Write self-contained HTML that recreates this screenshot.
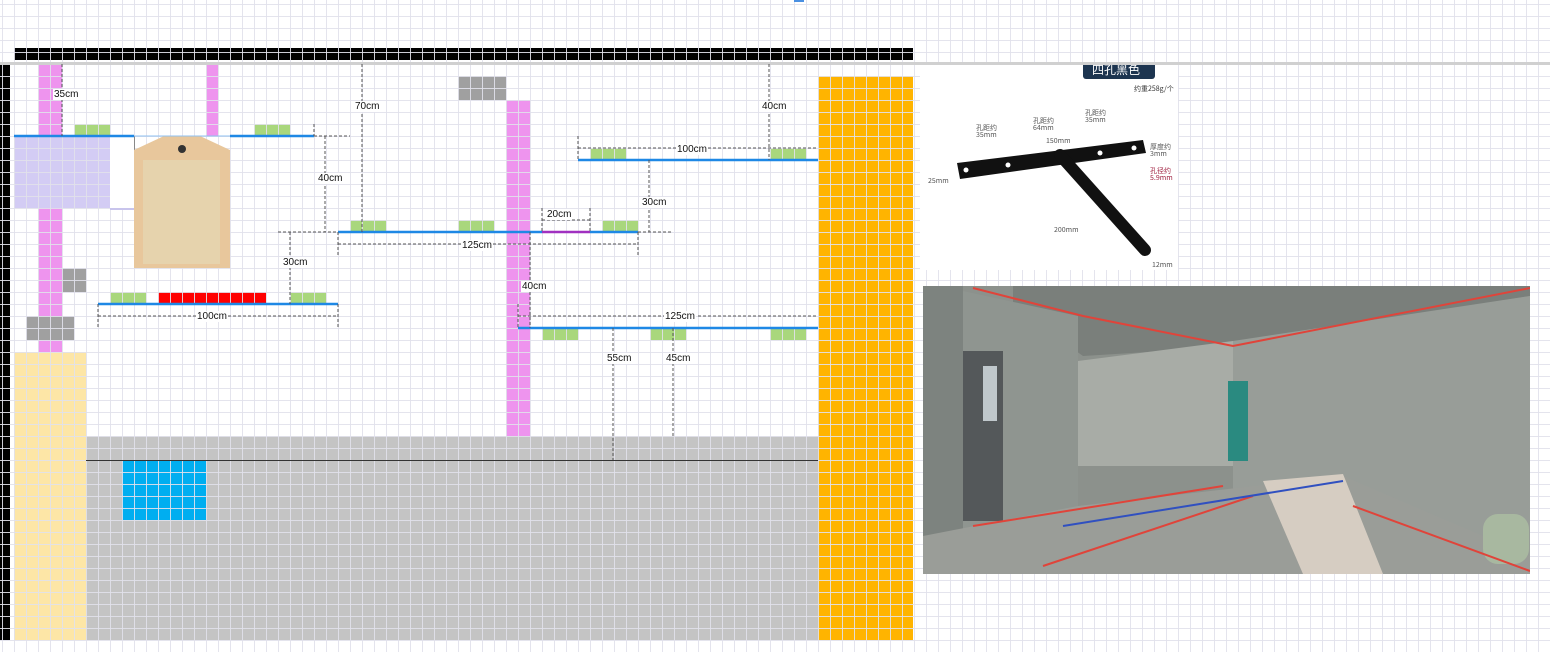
<!DOCTYPE html>
<html><head><meta charset="utf-8"><style>
html,body{margin:0;padding:0}
body{width:1550px;height:652px;position:relative;overflow:hidden;background:#fff;font-family:"Liberation Sans","Noto Sans CJK SC",sans-serif}
.a{position:absolute}
.grid{position:absolute;left:0;top:0;width:1550px;height:652px;
background-image:linear-gradient(to right,rgba(225,225,235,.9) 1px,transparent 1px),linear-gradient(to bottom,rgba(225,225,235,.9) 1px,transparent 1px);
background-size:12px 12px;background-position:2px 4px}
.g{background:#a9d77c}.gr{background:#a0a0a0}.pk{background:#ee94ee}
.t{position:absolute;font-size:10px;color:#111;background:#fff;line-height:11px;padding:0 1px}
</style></head><body>
<div class="a" style="left:14px;top:48px;width:899px;height:12px;background:#000"></div>
<div class="a" style="left:0;top:64px;width:10px;height:576px;background:#000"></div>
<div class="a" style="left:14px;top:352px;width:72px;height:288px;background:#fde6a6"></div>
<div class="a" style="left:818px;top:76px;width:95px;height:564px;background:#ffb400"></div>
<div class="a" style="left:86px;top:436px;width:732px;height:204px;background:#c4c4c4"></div>
<div class="a" style="left:122px;top:460px;width:84px;height:60px;background:#00aef0"></div>
<div class="a pk" style="left:38px;top:64px;width:24px;height:288px"></div>
<div class="a pk" style="left:206px;top:64px;width:12px;height:72px"></div>
<div class="a pk" style="left:506px;top:100px;width:24px;height:336px"></div>
<div class="a" style="left:14px;top:136px;width:96px;height:72px;background:#d3ccf4"></div>
<div class="a g" style="left:74px;top:124px;width:36px;height:12px"></div>
<div class="a g" style="left:254px;top:124px;width:36px;height:12px"></div>
<div class="a g" style="left:350px;top:220px;width:36px;height:12px"></div>
<div class="a g" style="left:458px;top:220px;width:36px;height:12px"></div>
<div class="a g" style="left:602px;top:220px;width:36px;height:12px"></div>
<div class="a g" style="left:590px;top:148px;width:36px;height:12px"></div>
<div class="a g" style="left:770px;top:148px;width:36px;height:12px"></div>
<div class="a g" style="left:110px;top:292px;width:36px;height:12px"></div>
<div class="a g" style="left:290px;top:292px;width:36px;height:12px"></div>
<div class="a g" style="left:542px;top:328px;width:36px;height:12px"></div>
<div class="a g" style="left:650px;top:328px;width:36px;height:12px"></div>
<div class="a g" style="left:770px;top:328px;width:36px;height:12px"></div>
<div class="a" style="left:158px;top:292px;width:108px;height:12px;background:#f00"></div>
<div class="a gr" style="left:458px;top:76px;width:48px;height:24px"></div>
<div class="a gr" style="left:62px;top:268px;width:24px;height:24px"></div>
<div class="a gr" style="left:26px;top:316px;width:48px;height:24px"></div>
<div class="grid"></div>
<div class="a" style="left:0;top:62px;width:1550px;height:3px;background:#d0d0d0"></div>
<div class="a" style="left:86px;top:460px;width:732px;height:1px;background:#333"></div>
<div class="a" style="left:110px;top:136px;width:24px;height:72px;background:#fff;border-bottom:2px solid #c8c4ec;border-right:1px solid #888"></div>
<svg class="a" style="left:134px;top:136px" width="96" height="132"><polygon points="0,14 30,0 66,0 96,14 96,132 0,132" fill="#e8c79c"/><rect x="9" y="24" width="77" height="104" fill="#e6d3ad"/><circle cx="48" cy="13" r="4" fill="#333"/></svg>
<svg class="a" style="left:0;top:0" width="920" height="652">
<g stroke="#1e88e5" stroke-width="2.5">
<line x1="14" y1="136" x2="134" y2="136"/><line x1="230" y1="136" x2="314" y2="136"/>
<line x1="578" y1="160" x2="818" y2="160"/><line x1="338" y1="232" x2="542" y2="232"/><line x1="590" y1="232" x2="638" y2="232"/>
<line x1="98" y1="304" x2="338" y2="304"/><line x1="518" y1="328" x2="818" y2="328"/></g>
<line x1="134" y1="136" x2="230" y2="136" stroke="#8fc0f0" stroke-width="1"/>
<line x1="542" y1="232" x2="590" y2="232" stroke="#a030c0" stroke-width="2.5"/>
<g stroke="#555" stroke-width="1" stroke-dasharray="3,2" fill="none">
<path d="M62 64V136M362 64V232M325 136V232M314 136H350M278 232H338M290 232V304M98 316H338M98 304V328M338 304V328M338 244H638M338 232V256M638 232V256M542 220H590M542 208V232M590 208V232M649 160V232M638 232H672M578 148H818M578 136V160M769 64V160M530 232V328M518 304V328M518 316H818M613 328V460M673 328V436M314 124V136"/></g>
</svg>
<span class="t" style="left:53px;top:89px">35cm</span>
<span class="t" style="left:354px;top:101px">70cm</span>
<span class="t" style="left:317px;top:173px">40cm</span>
<span class="t" style="left:282px;top:257px">30cm</span>
<span class="t" style="left:196px;top:311px">100cm</span>
<span class="t" style="left:461px;top:240px">125cm</span>
<span class="t" style="left:546px;top:209px">20cm</span>
<span class="t" style="left:641px;top:197px">30cm</span>
<span class="t" style="left:676px;top:144px">100cm</span>
<span class="t" style="left:761px;top:101px">40cm</span>
<span class="t" style="left:521px;top:281px">40cm</span>
<span class="t" style="left:664px;top:311px">125cm</span>
<span class="t" style="left:606px;top:353px">55cm</span>
<span class="t" style="left:665px;top:353px">45cm</span>
<div class="a" style="left:794px;top:0;width:10px;height:2px;background:#4a90e2"></div>
<svg class="a" style="left:920px;top:65px" width="258" height="205">
<rect width="258" height="205" fill="#fff"/>
<rect x="163" y="-8" width="72" height="22" rx="3" fill="#1d3550"/>
<text x="172" y="9" font-size="12" fill="#fff" font-family="Noto Sans CJK SC,sans-serif">四孔黑色</text>
<text x="214" y="26" font-size="7" fill="#333" font-family="Noto Sans CJK SC,sans-serif">约重258g/个</text>
<polygon points="37,98 223,75 226,88 40,114" fill="#111"/>
<line x1="140" y1="90" x2="225" y2="185" stroke="#111" stroke-width="12" stroke-linecap="round"/>
<g fill="#fff"><circle cx="46" cy="105" r="2.5"/><circle cx="88" cy="100" r="2.5"/><circle cx="180" cy="88" r="2.5"/><circle cx="214" cy="83" r="2.5"/></g>
<g font-size="7" fill="#555" font-family="Noto Sans CJK SC,sans-serif"><text x="56" y="65">孔距约</text><text x="56" y="72">35mm</text><text x="113" y="58">孔距约</text><text x="113" y="65">64mm</text><text x="165" y="50">孔距约</text><text x="165" y="57">35mm</text><text x="126" y="78">150mm</text><text x="230" y="84">厚度约</text><text x="230" y="91">3mm</text><text x="230" y="108" fill="#a02040">孔径约</text><text x="230" y="115" fill="#a02040">5.9mm</text><text x="8" y="118">25mm</text><text x="134" y="167">200mm</text><text x="232" y="202">12mm</text></g>
</svg>
<svg class="a" style="left:923px;top:286px" width="607" height="288">
<rect width="607" height="288" fill="#8c918c"/>
<polygon points="90,0 607,0 607,10 420,40 330,60 240,65 160,70 90,20" fill="#7a7f7b"/>
<rect x="0" y="0" width="40" height="288" fill="#7d837f"/>
<polygon points="40,5 155,30 155,230 40,250" fill="#8f9590"/>
<rect x="40" y="65" width="40" height="170" fill="#54585a"/>
<rect x="60" y="80" width="14" height="55" fill="#c0c8cc"/>
<polygon points="155,75 310,55 310,180 155,180" fill="#a8aca6"/>
<polygon points="310,55 607,10 607,280 310,240" fill="#989d98"/>
<rect x="305" y="95" width="20" height="80" fill="#2a8a80"/>
<polygon points="0,250 155,220 420,190 607,270 607,288 0,288" fill="#9a9d98"/>
<polygon points="340,195 420,188 460,288 380,288" fill="#d6cdc2"/>
<rect x="560" y="228" width="46" height="50" rx="15" fill="#a8b8a0"/>
<g stroke="#e0443a" stroke-width="2" fill="none"><path d="M50 2L160 30M160 30L310 60L607 2M50 240L300 200M120 280L330 210M430 220L607 285"/></g>
<path d="M140 240L420 195" stroke="#3050c0" stroke-width="2"/>
</svg>
</body></html>
